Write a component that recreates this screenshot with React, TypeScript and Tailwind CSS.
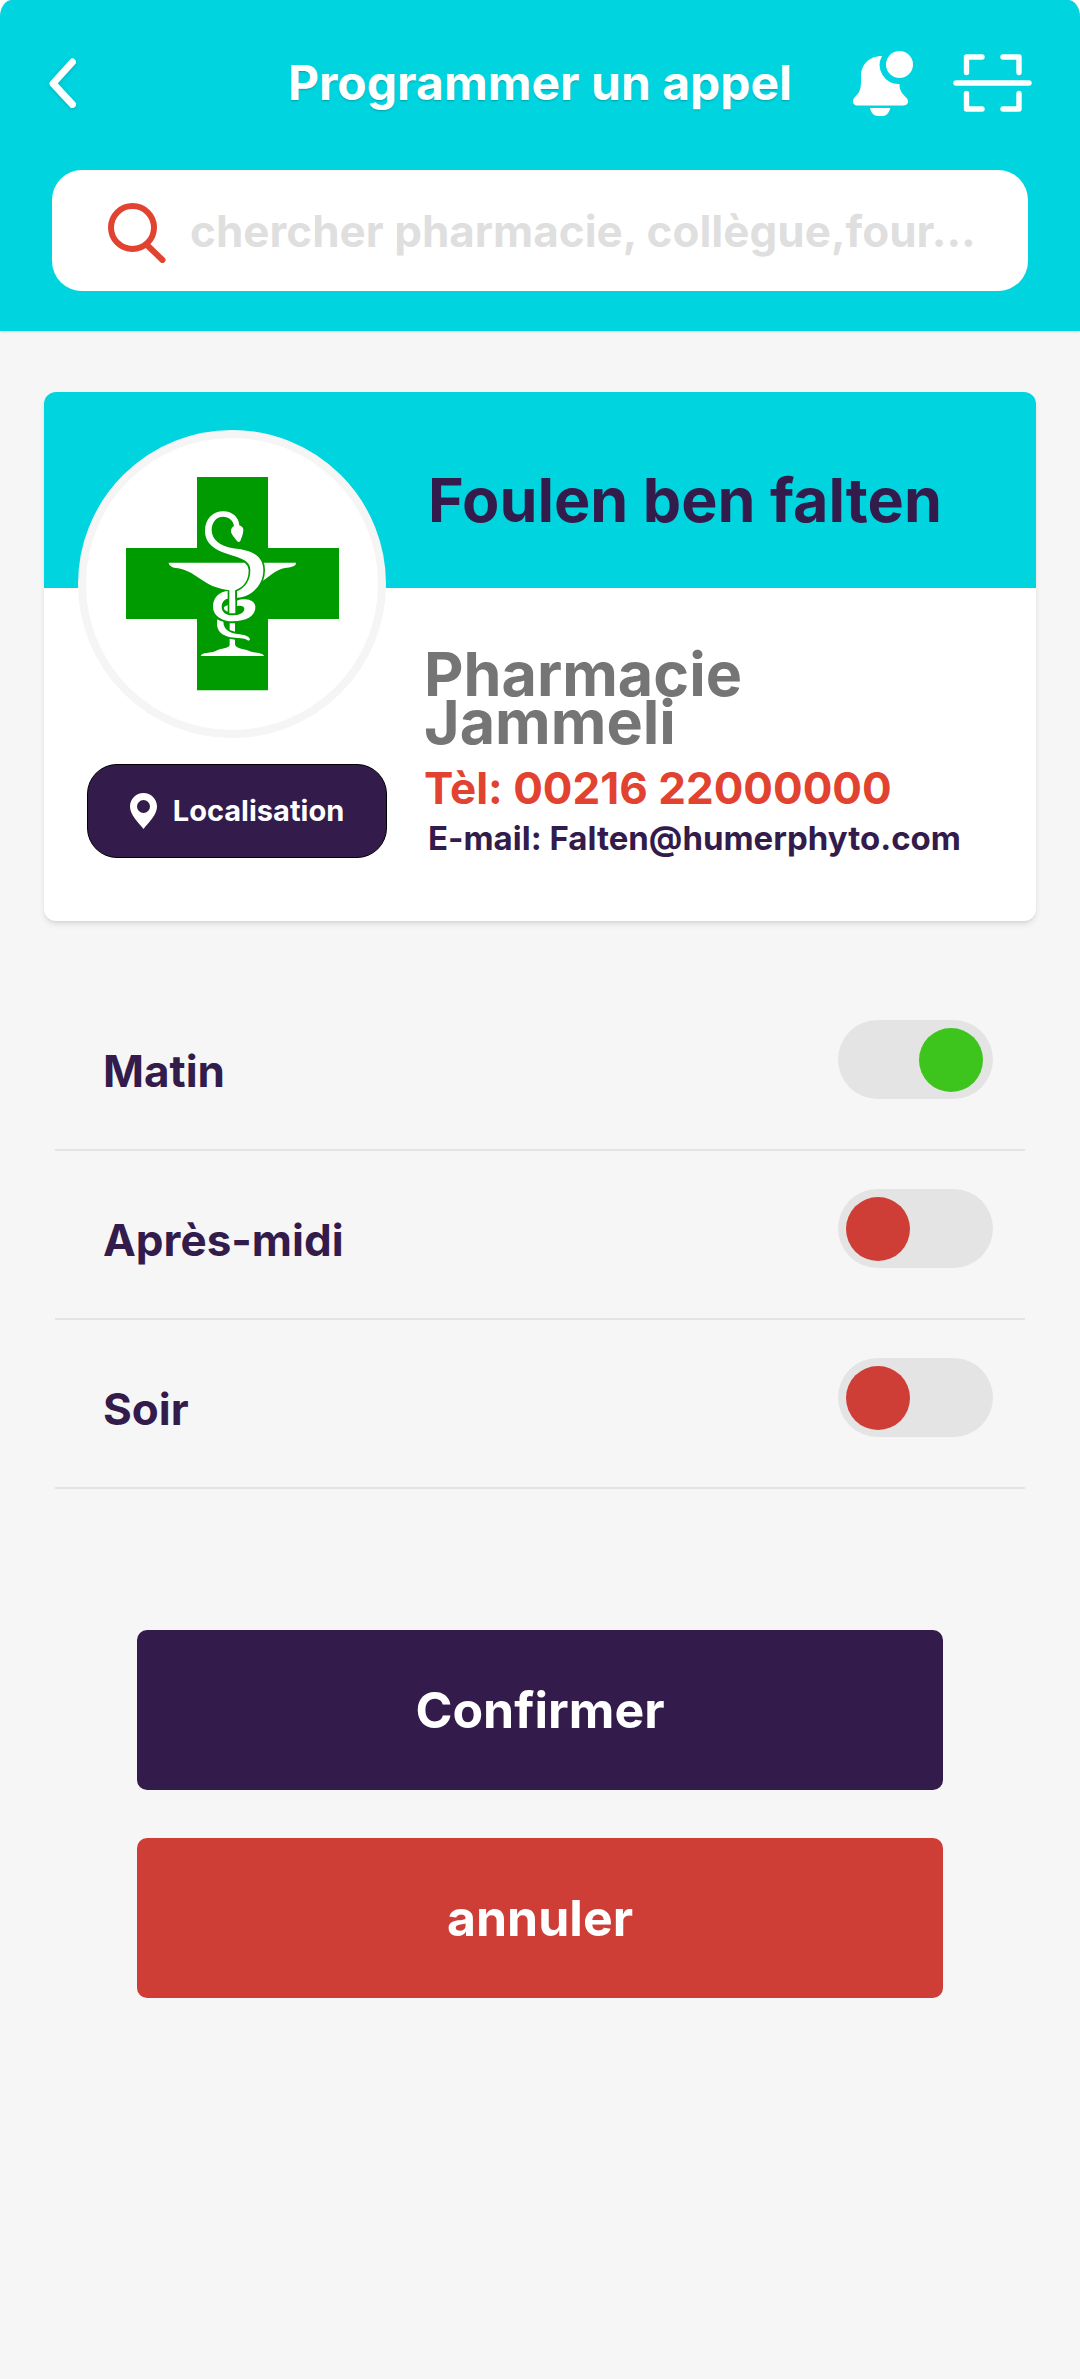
import React, { useState } from "react";

function HygieiaCross() {
  return (
    <svg viewBox="291 293 639 640" className="w-[213px]" role="img" aria-label="Pharmacie">
      <path fill="#009b00" d="M504 293h213v213h213v213H717v214H504V719H291V506h213z" />
      <g fill="#fff">
        <path d="M419 550H801C802 561 785 564 768 566C742 571 722 590 700 606C676 624 648 631 619 633V702H601V633C562 629 535 614 511 597C490 582 467 569 447 567C430 565 420 560 419 550Z" />
        <path
          stroke="#009b00"
          strokeWidth="10"
          paintOrder="stroke"
          d="M615 440C613 424 600 412 582 412C561 412 548 430 548 452C548 480 572 500 612 507C662 512 703 525 703 573C703 620 665 653 624 655V636C650 625 664 602 664 572C664 552 650 541 622 532C570 518 528 500 528 455C528 418 552 396 583 396C610 396 630 415 631 438C638 440 643 445 643 451C643 465 637 475 634 485Q629 491 624 485C617 475 606 465 606 455C606 447 610 443 615 440Z"
        />
        <path d="M596 635C570 638 552 655 552 682C552 710 580 726 612 726C650 726 679 712 679 684C679 668 665 660 648 660C638 660 630 661 624 664V680C637 677 647 680 646 690C644 702 630 708 610 708C590 708 578 698 578 682C578 670 585 660 596 658Z" />
        <path d="M596 677V697C588 694 583 689 585 683Z" />
        <path d="M602 732h16v25l-16 -5z" />
        <path d="M565 720C560 748 571 766 600 773C625 777 648 775 658 784L663 781C662 770 645 766 625 764C600 760 584 750 583 727Q572 726 565 720Z" />
        <path d="M602 778L618 781V795C620 808 640 808 655 813C670 822 700 818 705 830H515C520 818 545 822 560 815C575 806 600 808 602 797Z" />
      </g>
    </svg>
  );
}

function BellIcon() {
  return (
    <svg viewBox="0 0 60 65" className="h-[65px] w-[60px]" fill="currentColor" aria-hidden="true">
      <circle cx="46.5" cy="13.5" r="13.5" />
      <path d="M29 5C16 5 8 14 8 25V31C8 40 5 43 1.500 46.500C-1.500 50 0 54.500 4 54.500H51C55 54.500 56.500 50 53.500 47C49 42 46.500 40 46.500 33A19 19 0 0 1 29 5Z" />
      <path d="M17 57H37.500C36 62 33 65 30 65H25C21 65 18 62 17 57Z" />
    </svg>
  );
}

function ScanIcon() {
  return (
    <svg
      viewBox="0 0 79 58"
      className="h-[58px] w-[79px]"
      fill="none"
      stroke="currentColor"
      strokeWidth="5.4"
      strokeLinecap="round"
      strokeLinejoin="round"
      aria-hidden="true"
    >
      <path d="M29 3H13.500V18.500M50 3H66V18.500M29 55H13.500V39.500M50 55H66V39.500M3 29H76" />
    </svg>
  );
}

function SlotRow({ label, initial }: { label: string; initial: boolean }) {
  const [on, setOn] = useState(initial);
  return (
    <li className="border-b-2 border-[#e4e4e4] pt-[38px] pr-8 pb-[50px] pl-12">
      <label className="flex cursor-pointer items-end justify-between">
        <span className="text-[44px] leading-[56px] font-bold text-[#331b4b]">{label}</span>
        <input
          type="checkbox"
          role="switch"
          checked={on}
          onChange={(e) => setOn(e.target.checked)}
          className="flex h-[79px] w-[155px] cursor-pointer appearance-none items-center rounded-full bg-[#e4e4e4] pr-[10px] pl-2 before:size-16 before:rounded-full before:bg-[#cf3e36] before:content-[''] checked:justify-end checked:before:bg-[#3dc51d]"
        />
      </label>
    </li>
  );
}

export default function App() {
  return (
    <div className="bg-white font-['Inter',sans-serif]">
      <div className="min-h-screen rounded-tl-[12px_17px] rounded-tr-[12px_17px] bg-[#f6f6f6]">
        <header className="rounded-tl-[12px_17px] rounded-tr-[12px_17px] bg-[#00d4df] px-12 pt-12 pb-10 text-white shadow-sm">
          <div className="grid h-[70px] grid-cols-[1fr_auto_1fr] items-center">
            <button type="button" aria-label="Retour" className="w-7">
              <svg viewBox="0 0 28 50" className="h-[50px] w-7 drop-shadow-sm" fill="none" stroke="currentColor" strokeWidth="7" strokeLinecap="round" strokeLinejoin="round" aria-hidden="true">
                <path d="M24.500 4L5 25.500L24.500 46.500" />
              </svg>
            </button>
            <h1 className="text-[48px] leading-[56px] font-bold text-shadow-sm">Programmer un appel</h1>
            <div className="flex items-center justify-end gap-10">
              <button type="button" aria-label="Notifications"><BellIcon /></button>
              <button type="button" aria-label="Scanner"><ScanIcon /></button>
            </div>
          </div>
          <label className="mx-1 mt-[52px] flex h-[121px] items-center gap-6 rounded-[30px] bg-white pr-5 pl-14">
            <svg viewBox="0 0 58 60" className="mt-1 h-[60px] w-[58px] shrink-0" fill="none" stroke="#e24330" strokeWidth="6" strokeLinecap="round" aria-hidden="true">
              <circle cx="24.500" cy="24.500" r="21.500" />
              <path d="M40 43L54.500 57" />
            </svg>
            <input
              type="search"
              aria-label="Chercher"
              placeholder="chercher pharmacie, collègue,four..."
              className="min-w-0 flex-1 text-[44px] leading-[56px] font-bold text-[#331b4b] outline-none placeholder:text-[#dfdfdf]"
            />
          </label>
        </header>

        <main className="pt-[61px]">
          <section className="mx-11 grid grid-cols-[380px_1fr] grid-rows-[196px_auto] overflow-hidden rounded-xl bg-white shadow-md">
            <div className="col-span-2 col-start-1 row-start-1 bg-[#00d4df]" />
            <h2 className="col-start-2 row-start-1 self-center pt-5 pl-1 text-[61px] leading-[72px] font-bold text-[#331b4b]">Foulen ben falten</h2>
            <div className="col-start-1 row-span-2 row-start-1 pt-[38px] pb-[63px] pl-[34px]">
              <div className="flex size-[308px] items-center justify-center rounded-full border-8 border-[#f5f5f5] bg-white">
                <HygieiaCross />
              </div>
              <button type="button" className="mt-[26px] ml-[9px] flex h-[94px] w-[300px] items-center justify-center gap-4 rounded-[30px] border border-black bg-[#331b4b] text-[29px] font-bold text-white">
                <svg viewBox="0 0 27 36" className="h-9 w-[27px]" fill="currentColor" aria-hidden="true">
                  <path fillRule="evenodd" d="M13.500 0C21 0 27 6 27 13.500C27 22 19 29 13.500 36C8 29 0 22 0 13.500C0 6 6 0 13.500 0ZM13.500 7A6.500 6.500 0 1 0 13.500 20A6.500 6.500 0 1 0 13.500 7Z" />
                </svg>
                Localisation
              </button>
            </div>
            <div className="col-start-2 row-start-2 pt-[62px]">
              <p className="w-[400px] text-[61px] leading-[48px] font-bold text-[#757575]">Pharmacie Jammeli</p>
              <p className="mt-[18px] text-[44px] leading-[48px] font-bold text-[#e24330]">Tèl: 00216 22000000</p>
              <p className="mt-1.5 pl-1 text-[33px] leading-[40px] font-bold text-[#331b4b]">E-mail: Falten@humerphyto.com</p>
            </div>
          </section>

          <ul className="mx-[55px] mt-[61px]">
            <SlotRow label="Matin" initial={true} />
            <SlotRow label="Après-midi" initial={false} />
            <SlotRow label="Soir" initial={false} />
          </ul>

          <div className="mx-[137px] mt-[141px] flex flex-col gap-12 text-[50px] font-bold text-white">
            <button type="button" className="h-40 rounded-[10px] bg-[#331b4b]">Confirmer</button>
            <button type="button" className="h-40 rounded-[10px] bg-[#cf3e36]">annuler</button>
          </div>
        </main>
      </div>
    </div>
  );
}
